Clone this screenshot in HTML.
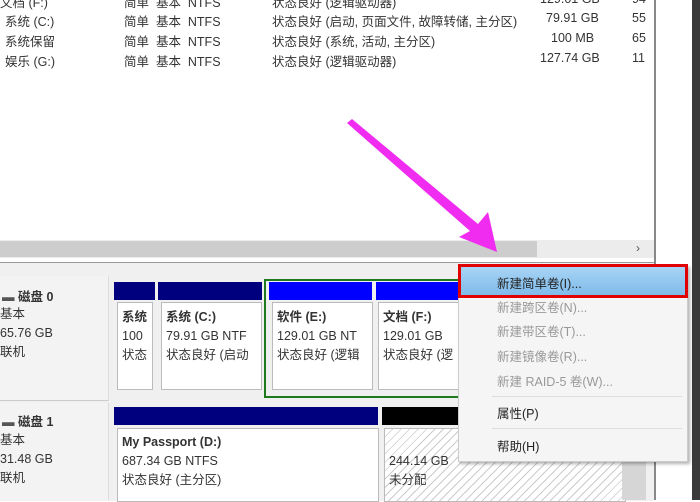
<!DOCTYPE html><html><head><meta charset="utf-8"><style>
body{margin:0;width:700px;height:500px;overflow:hidden;background:#fff;font-family:"Liberation Sans","Noto Sans CJK SC",sans-serif;font-size:12.5px;color:#333;position:relative}
.a{position:absolute;white-space:nowrap}
.bx{position:absolute;background:#fff;border:1px solid #bbb}
.t{position:absolute;white-space:nowrap;font-size:12.5px;color:#333}
.m{position:absolute;left:497px;font-size:12.5px;color:#999;white-space:nowrap}
</style></head><body>
<div class="a" style="left:0;top:0;width:655px;height:262px;background:#fff"></div>
<div class="a" style="left:654px;top:0;width:2px;height:500px;background:#888"></div>
<div class="a" style="left:692px;top:0;width:8px;height:500px;background:#3a3a3a"></div>
<!-- rows -->
<div class="t" style="left:0;top:-8px">文档 (F:)</div><div class="t" style="left:124px;top:-8px">简单 &nbsp;基本 &nbsp;NTFS</div><div class="t" style="left:272px;top:-8px">状态良好 (逻辑驱动器)</div><div class="t" style="left:540px;top:-8px">129.01 GB</div><div class="t" style="left:632px;top:-8px">94</div>
<div class="t" style="left:5px;top:11px">系统 (C:)</div><div class="t" style="left:124px;top:11px">简单 &nbsp;基本 &nbsp;NTFS</div><div class="t" style="left:272px;top:11px">状态良好 (启动, 页面文件, 故障转储, 主分区)</div><div class="t" style="left:546px;top:11px">79.91 GB</div><div class="t" style="left:632px;top:11px">55</div>
<div class="t" style="left:5px;top:31px">系统保留</div><div class="t" style="left:124px;top:31px">简单 &nbsp;基本 &nbsp;NTFS</div><div class="t" style="left:272px;top:31px">状态良好 (系统, 活动, 主分区)</div><div class="t" style="left:551px;top:31px">100 MB</div><div class="t" style="left:632px;top:31px">65</div>
<div class="t" style="left:5px;top:51px">娱乐 (G:)</div><div class="t" style="left:124px;top:51px">简单 &nbsp;基本 &nbsp;NTFS</div><div class="t" style="left:272px;top:51px">状态良好 (逻辑驱动器)</div><div class="t" style="left:540px;top:51px">127.74 GB</div><div class="t" style="left:632px;top:51px">11</div>
<!-- scrollbar -->
<div class="a" style="left:0;top:240px;width:654px;height:18px;background:#ececec"></div>
<div class="a" style="left:0;top:241px;width:537px;height:16px;background:#cdcdcd"></div>
<div class="a" style="left:636px;top:241px;font-size:12px;color:#555">›</div>
<!-- lower panel -->
<div class="a" style="left:0;top:262px;width:654px;height:238px;background:#f0f0f0;border-top:1px solid #999"></div>
<div class="a" style="left:0;top:276px;width:108px;height:124px;background:#f3f3f3;border-right:1px solid #ddd;border-bottom:1px solid #ccc"></div>
<div class="a" style="left:0;top:403px;width:108px;height:97px;background:#f3f3f3;border-right:1px solid #ddd"></div>
<div class="t" style="left:2px;top:286px"><b style="color:#555">▬</b> <b>磁盘 0</b></div>
<div class="t" style="left:0;top:305px;line-height:19px">基本<br>65.76 GB<br>联机</div>
<div class="t" style="left:2px;top:411px"><b style="color:#555">▬</b> <b>磁盘 1</b></div>
<div class="t" style="left:0;top:431px;line-height:19px">基本<br>31.48 GB<br>联机</div>
<!-- disk0 -->
<div class="a" style="left:114px;top:282px;width:41px;height:18px;background:#00007f"></div>
<div class="a" style="left:158px;top:282px;width:104px;height:18px;background:#00007f"></div>
<div class="a" style="left:264px;top:279px;width:200px;height:115px;border:2px solid #1f7a1f;background:#f0f0f0"></div>
<div class="a" style="left:269px;top:282px;width:103px;height:18px;background:#0000ff"></div>
<div class="a" style="left:376px;top:282px;width:90px;height:18px;background:#0000ff"></div>
<div class="bx" style="left:117px;top:302px;width:34px;height:86px"></div>
<div class="bx" style="left:161px;top:302px;width:99px;height:86px"></div>
<div class="bx" style="left:272px;top:302px;width:99px;height:86px"></div>
<div class="bx" style="left:378px;top:302px;width:90px;height:86px"></div>
<div class="t" style="left:122px;top:308px;overflow:hidden;width:30px;line-height:19px"><b>系统</b><br>100<br>状态</div>
<div class="t" style="left:166px;top:308px;overflow:hidden;width:93px;line-height:19px"><b>系统 (C:)</b><br>79.91 GB NTF<br>状态良好 (启动</div>
<div class="t" style="left:277px;top:308px;overflow:hidden;width:92px;line-height:19px"><b>软件 (E:)</b><br>129.01 GB NT<br>状态良好 (逻辑</div>
<div class="t" style="left:383px;top:308px;line-height:19px"><b>文档 (F:)</b><br>129.01 GB<br>状态良好 (逻</div>
<!-- disk1 -->
<div class="a" style="left:114px;top:407px;width:264px;height:18px;background:#00007f"></div>
<div class="a" style="left:382px;top:407px;width:90px;height:18px;background:#000"></div>
<div class="bx" style="left:117px;top:428px;width:260px;height:72px"></div>
<div class="a" style="left:384px;top:428px;width:240px;height:72px;background:repeating-linear-gradient(135deg,#fff 0 5px,#ccc 5px 6px);border:1px solid #bbb"></div>
<div class="t" style="left:122px;top:433px;line-height:19px"><b>My Passport (D:)</b><br>687.34 GB NTFS<br>状态良好 (主分区)</div>
<div class="t" style="left:389px;top:452px;line-height:19px">244.14 GB<br>未分配</div>
<div class="a" style="left:622px;top:458px;width:24px;height:42px;background:#d6d6d6"></div>
<!-- arrow -->
<svg class="a" style="left:0;top:0" width="700" height="500"><polygon points="347,123 352,119 478,224 488,212 497,252 459,237 470,231" fill="#f02cf0"/></svg>
<!-- menu -->
<div class="a" style="left:458px;top:265px;width:228px;height:195px;background:#f5f5f5;border:1px solid #ccc;box-shadow:2px 2px 3px rgba(0,0,0,.3)"></div>
<div class="a" style="left:458px;top:264px;width:224px;height:28px;background:linear-gradient(#a8d4f5,#7fbbea);border:3px solid #e00000"></div>
<div class="m" style="top:273px;color:#222">新建简单卷(I)...</div>
<div class="m" style="top:297px">新建跨区卷(N)...</div>
<div class="m" style="top:321px">新建带区卷(T)...</div>
<div class="m" style="top:346px">新建镜像卷(R)...</div>
<div class="m" style="top:371px">新建 RAID-5 卷(W)...</div>
<div class="a" style="left:492px;top:396px;width:190px;height:1px;background:#ddd"></div>
<div class="m" style="top:403px;color:#222">属性(P)</div>
<div class="a" style="left:492px;top:428px;width:190px;height:1px;background:#ddd"></div>
<div class="m" style="top:436px;color:#222">帮助(H)</div>
</body></html>
